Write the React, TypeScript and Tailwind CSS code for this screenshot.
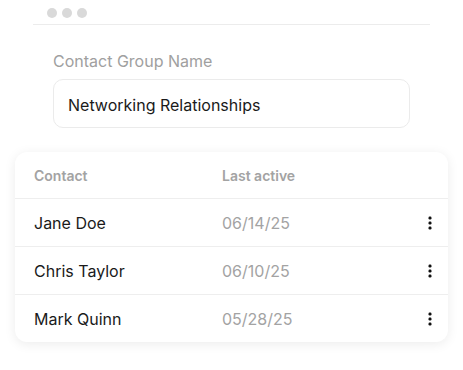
import React from "react";

const rows = [
  { name: "Jane Doe", date: "06/14/25" },
  { name: "Chris Taylor", date: "06/10/25" },
  { name: "Mark Quinn", date: "05/28/25" },
];

function Kebab() {
  return (
    <svg width="4" height="14" viewBox="0 0 4 14" className="block">
      <rect x="0.5" y="0.5" width="3" height="3" rx="1.2" fill="#111" />
      <rect x="0.5" y="5.5" width="3" height="3" rx="1.2" fill="#111" />
      <rect x="0.5" y="10.5" width="3" height="3" rx="1.2" fill="#111" />
    </svg>
  );
}

export default function App() {
  return (
    <div className="w-[463px] h-[370px] bg-white font-['Inter',sans-serif] overflow-hidden">
      <div className="mx-[33px] w-[397px] h-[25px] border-b border-[#ececec] flex items-start pt-[8px] pl-[14px] gap-[5px]">
        <span className="w-[10px] h-[10px] rounded-full bg-[#d9d9d9]" />
        <span className="w-[10px] h-[10px] rounded-full bg-[#d9d9d9]" />
        <span className="w-[10px] h-[10px] rounded-full bg-[#d9d9d9]" />
      </div>
      <div className="pl-[53px] pt-[26px]">
        <div className="text-[16px] leading-[20px] text-[#a0a0a0]">Contact Group Name</div>
        <div className="mt-[8px] w-[357px] h-[49px] rounded-[10px] border border-[#ebebeb] flex items-center pl-[14px] pt-[2px] text-[16px] text-[#1a1a1a]">
          Networking Relationships
        </div>
      </div>
      <div className="mx-[15px] mt-[24px] rounded-[12px] bg-white shadow-[0_2px_12px_rgba(0,0,0,0.08)] overflow-hidden">
        <div className="h-[46px] flex items-center px-[19px] text-[14px] font-semibold text-[#a3a3a3]">
          <div className="w-[188px]">Contact</div>
          <div>Last active</div>
        </div>
        {rows.map((r) => (
          <div key={r.name} className="h-[48px] border-t border-[#eeeeee] flex items-center pl-[19px] pr-[16px] text-[16px]">
            <div className="w-[188px] text-[#1a1a1a] pt-[1px]">{r.name}</div>
            <div className="flex-1 text-[#a3a3a3] pt-[1px]">{r.date}</div>
            <Kebab />
          </div>
        ))}
      </div>
    </div>
  );
}
